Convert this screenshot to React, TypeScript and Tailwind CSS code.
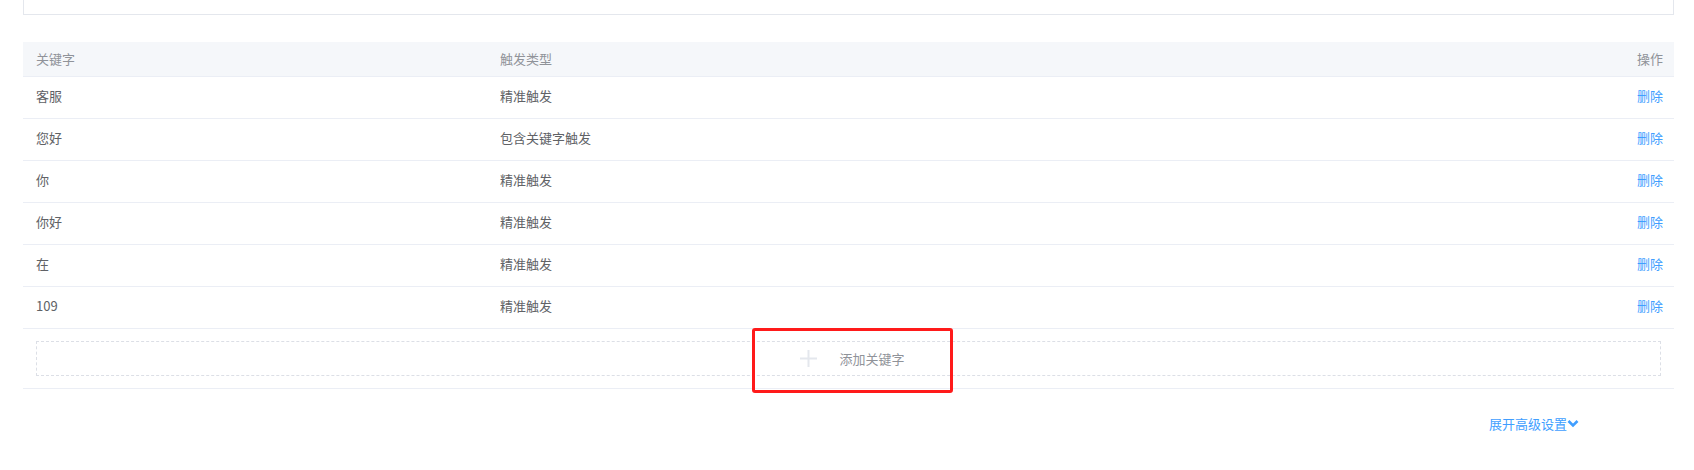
import { useState } from "react";

type Row = { keyword: string; type: string };

const initialRows: Row[] = [
  { keyword: "客服", type: "精准触发" },
  { keyword: "您好", type: "包含关键字触发" },
  { keyword: "你", type: "精准触发" },
  { keyword: "你好", type: "精准触发" },
  { keyword: "在", type: "精准触发" },
  { keyword: "109", type: "精准触发" },
];

const font = {
  fontFamily: '"Noto Sans CJK SC", "Noto Sans", "Liberation Sans", sans-serif',
};

const App = () => {
  const [rows, setRows] = useState<Row[]>(initialRows);

  return (
    <div className="relative w-[1694px] h-[470px] bg-white" style={font}>
      {/* bottom edge of the panel above */}
      <div className="ml-[23px] w-[1651px] h-[15px] border-x border-b border-[#e4e7ed]" />

      {/* keyword table */}
      <div className="ml-[23px] mt-[27px] w-[1651px] text-[13px]">
        <div className="flex h-[35px] items-center bg-[#f5f7fa] border-b border-[#ebeef5] text-[#909399]">
          <div className="w-[464px] pl-[13px]">关键字</div>
          <div className="flex-1 pl-[13px]">触发类型</div>
          <div className="pr-[11px]">操作</div>
        </div>

        {rows.map((row, i) => (
          <div
            key={i}
            className="flex h-[42px] items-center pb-[3px] border-b border-[#ebeef5] text-[#606266]"
          >
            <div className="w-[464px] pl-[13px]">{row.keyword}</div>
            <div className="flex-1 pl-[13px]">{row.type}</div>
            <button
              onClick={() => setRows(rows.filter((_, j) => j !== i))}
              className="pr-[11px] text-[#409eff]"
            >
              删除
            </button>
          </div>
        ))}

        {/* add row */}
        <div className="h-[60px] border-b border-[#ebeef5] px-[13px] pt-[12px]">
          <button className="flex h-[35px] w-full items-center justify-center pl-[14px] border border-dashed border-[#dcdfe6] text-[#909399]">
            <svg width="17" height="17" viewBox="0 0 17 17" className="mr-[22px] ml-[-6px]">
              <path d="M8.5 0v17M0 8.5h17" stroke="#e4e7ed" strokeWidth="2" />
            </svg>
            <span>添加关键字</span>
          </button>
        </div>
      </div>

      {/* advanced settings toggle */}
      <div className="ml-[23px] w-[1651px] mt-[25px] flex justify-end pr-[95px]">
        <button className="flex items-center text-[13px] text-[#409eff]">
          展开高级设置
          <svg width="12" height="9" viewBox="0 0 12 9">
            <path d="M1.5 2l4.5 4.5L10.5 2" fill="none" stroke="#409eff" strokeWidth="2.6" />
          </svg>
        </button>
      </div>

      {/* highlight annotation */}
      <div className="absolute left-[752px] top-[328px] w-[201px] h-[65px] rounded-[3px] border-[3px] border-[#ff1a1a] pointer-events-none" />
    </div>
  );
};

export default App;
